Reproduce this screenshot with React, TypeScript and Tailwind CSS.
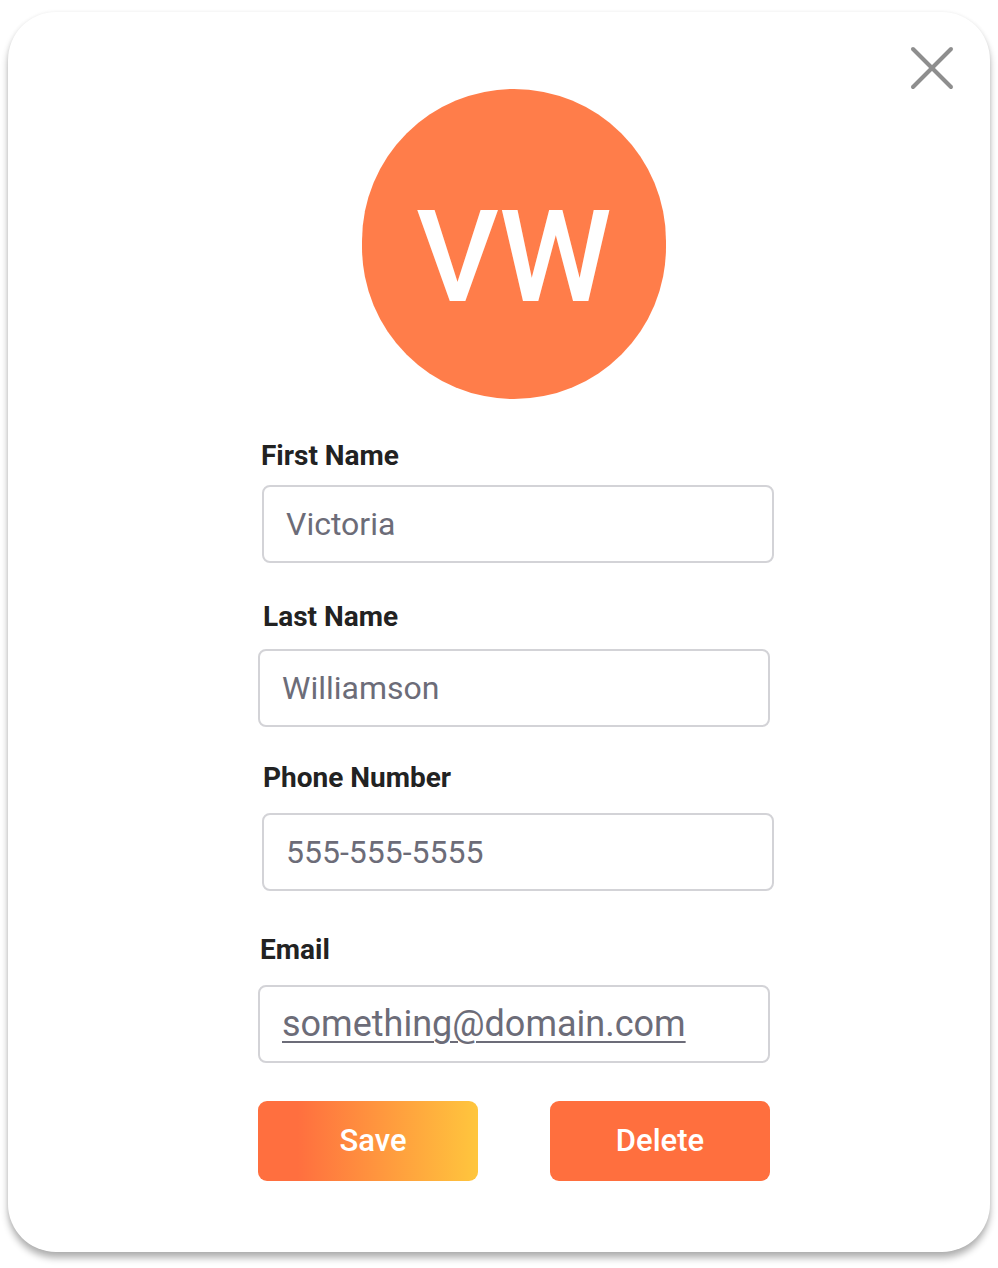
type Field = {
	label: string;
	value: string;
	labelClass: string;
	inputClass: string;
	link?: boolean;
};

const fields: Field[] = [
	{ label: 'First Name', value: 'Victoria', labelClass: 'mt-[42px] ml-[3px]', inputClass: 'mt-[14px] ml-[4px]' },
	{ label: 'Last Name', value: 'Williamson', labelClass: 'mt-[39px] ml-[5px]', inputClass: 'mt-[17px] ml-0' },
	{ label: 'Phone Number', value: '555-555-5555', labelClass: 'mt-[36px] ml-[5px]', inputClass: 'mt-[20px] ml-[4px]' },
	{ label: 'Email', value: 'something@domain.com', labelClass: 'mt-[44px] ml-[2px]', inputClass: 'mt-[20px] ml-0', link: true },
];

function CloseIcon() {
	return (
		<svg width="44" height="44" viewBox="0 0 44 44" fill="none" stroke="currentColor" strokeWidth="4" strokeLinecap="round">
			<line x1="3" y1="3" x2="41" y2="41" />
			<line x1="41" y1="3" x2="3" y2="41" />
		</svg>
	);
}

export default function App() {
	return (
		<div className="w-full h-[1268px] bg-white pt-[12px] px-[8px] font-['Roboto',sans-serif]">
			<div className="relative h-[1240px] rounded-[48px] bg-white shadow-[0_6px_7px_rgba(0,0,0,0.3),0_0_4px_rgba(0,0,0,0.06)]">
				{/* Close button */}
				<button type="button" className="absolute top-[34px] right-[36px] w-[44px] h-[44px] flex items-center justify-center text-[#8e8e8e]">
					<CloseIcon />
				</button>

				<div className="flex flex-col items-start pl-[250px] pt-[77px] w-[766px]">
					{/* Avatar */}
					<div className="ml-[104px] w-[304px] h-[310px] rounded-full bg-[#ff7d4a] flex items-center justify-center">
						<span className="text-white text-[128px] leading-none font-medium mt-[26px]">VW</span>
					</div>

					{fields.map((f) => (
						<div key={f.label} className="flex flex-col items-start">
							<label className={`${f.labelClass} text-[28px] leading-[30px] font-bold text-[#222222]`}>{f.label}</label>
							<div
								className={`${f.inputClass} w-[512px] h-[78px] border-2 border-[#d3d3d7] rounded-[8px] pl-[22px] flex items-center text-[#6c6c78]`}
							>
								{f.link ? (
									<span className="text-[36px] underline decoration-2 underline-offset-[5px]">{f.value}</span>
								) : (
									<span className="text-[32px]">{f.value}</span>
								)}
							</div>
						</div>
					))}

					{/* Actions */}
					<div className="mt-[38px] flex gap-[72px]">
						<button
							type="button"
							className="w-[220px] h-[80px] rounded-[9px] pl-[10px] bg-[linear-gradient(to_right,#ff6f3f_18%,#ffc63d_100%)] text-white text-[31px] font-medium"
						>
							Save
						</button>
						<button type="button" className="w-[220px] h-[80px] rounded-[9px] bg-[#ff6f3e] text-white text-[31px] font-medium">
							Delete
						</button>
					</div>
				</div>
			</div>
		</div>
	);
}
